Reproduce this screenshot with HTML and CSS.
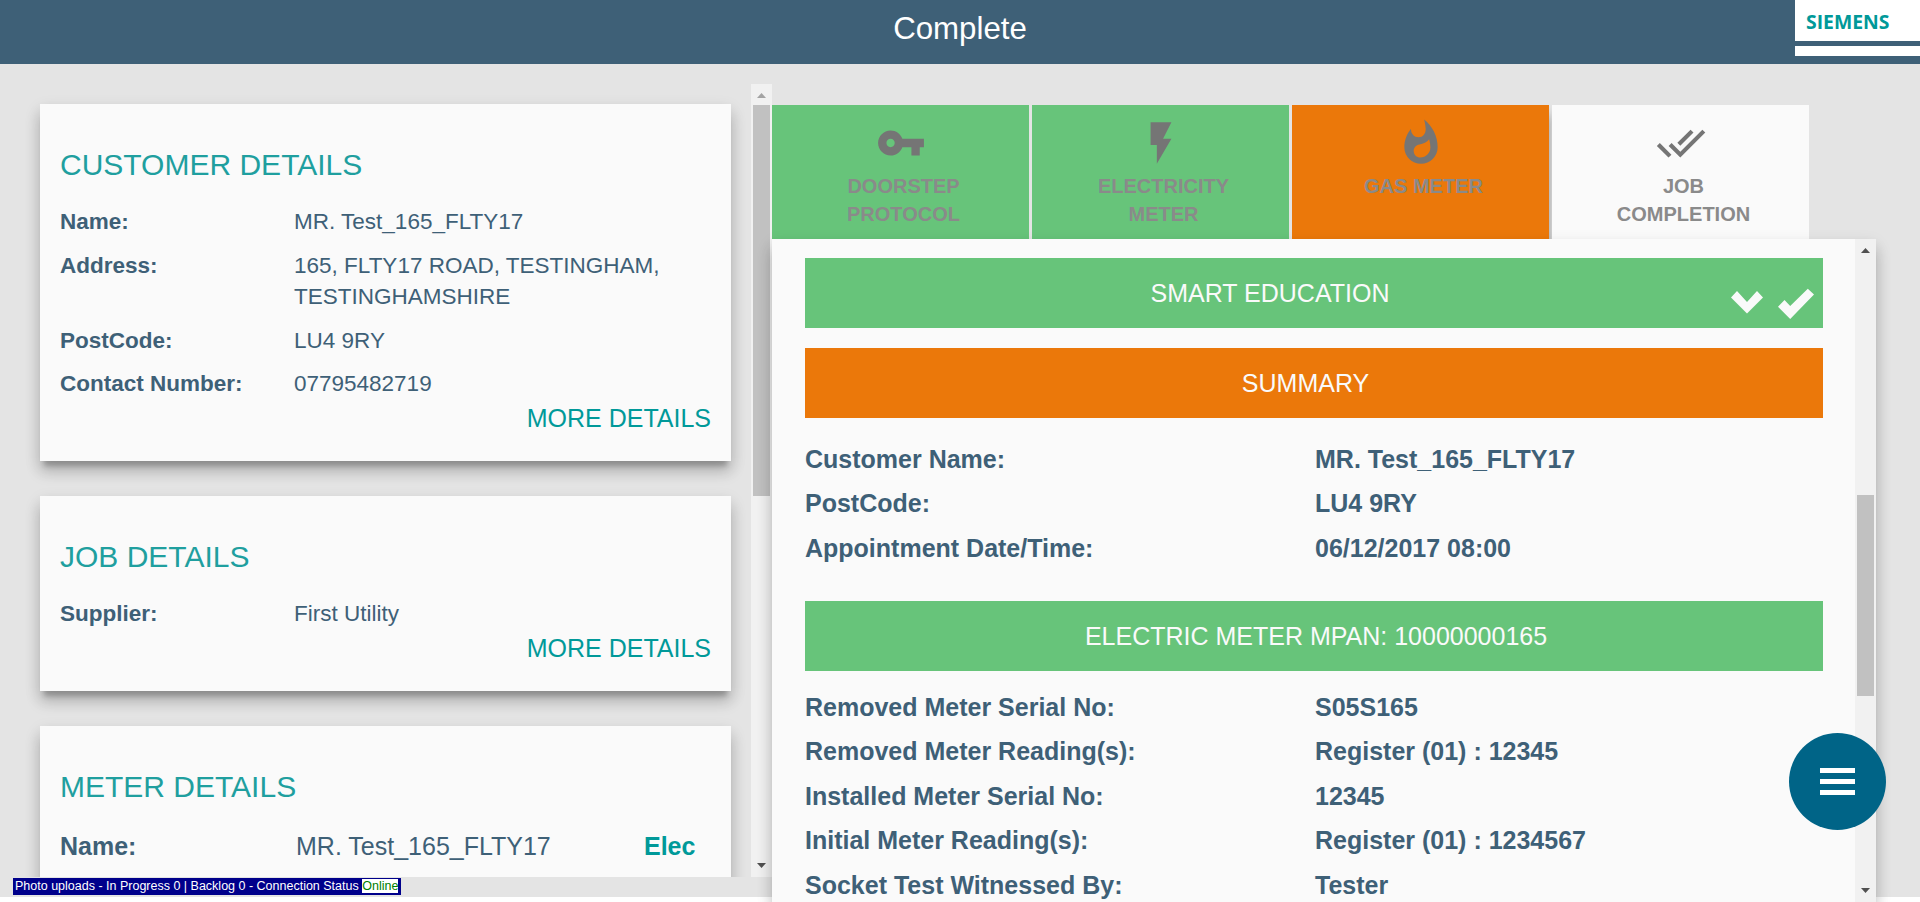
FILE: index.html
```html
<!DOCTYPE html>
<html lang="en">
<head>
<meta charset="utf-8">
<title>Complete</title>
<link rel="stylesheet" href="styles.css">
</head>
<body>
<div class="app">
  <header class="header">
    <h1 class="header-title">Complete</h1>
    <div class="brand"><span class="brand-name">SIEMENS</span><span class="brand-rule"></span></div>
  </header>

  <main class="main">
    <section class="sidebar">
      <div class="cards">
        <article class="card">
          <h2 class="card-title">CUSTOMER DETAILS</h2>
          <dl class="details">
            <dt>Name:</dt><dd>MR. Test_165_FLTY17</dd>
            <dt>Address:</dt><dd>165, FLTY17 ROAD, TESTINGHAM, TESTINGHAMSHIRE</dd>
            <dt>PostCode:</dt><dd>LU4 9RY</dd>
            <dt>Contact Number:</dt><dd>07795482719</dd>
          </dl>
          <a class="more">MORE DETAILS</a>
        </article>
        <article class="card">
          <h2 class="card-title">JOB DETAILS</h2>
          <dl class="details">
            <dt>Supplier:</dt><dd>First Utility</dd>
          </dl>
          <a class="more">MORE DETAILS</a>
        </article>
        <article class="card card-meter">
          <h2 class="card-title">METER DETAILS</h2>
          <div class="meter-row">
            <b class="meter-label">Name:</b><span class="meter-name">MR. Test_165_FLTY17</span><b class="meter-type">Elec</b>
          </div>
        </article>
      </div>
      <div class="scrollbar scrollbar-left">
        <svg class="arrow arrow-muted" viewBox="0 0 21 21"><path d="M6 14h9L10.500 9z"/></svg>
        <div class="thumb thumb-left"></div>
        <svg class="arrow arrow-end" viewBox="0 0 21 21"><path d="M6 7h9L10.500 12z"/></svg>
      </div>
    </section>

    <section class="content">
      <nav class="tabs">
        <div class="tab done">
          <svg class="tab-icon" viewBox="0 0 24 24"><path d="M12.650 10C11.830 7.670 9.610 6 7 6c-3.310 0-6 2.690-6 6s2.690 6 6 6c2.610 0 4.830-1.670 5.650-4H17v4h4v-4h2v-4H12.650zM7 14c-1.100 0-2-.900-2-2s.900-2 2-2 2 .900 2 2-.900 2-2 2z"/></svg>
          <span class="tab-label">DOORSTEP PROTOCOL</span>
        </div>
        <div class="tab done">
          <svg class="tab-icon" viewBox="0 0 24 24"><path d="M7 2v11h3v9l7-12h-4l4-8z"/></svg>
          <span class="tab-label">ELECTRICITY METER</span>
        </div>
        <div class="tab active">
          <svg class="tab-icon" viewBox="0 0 24 24"><path d="M13.500.670s.740 2.650.740 4.800c0 2.060-1.350 3.730-3.410 3.730-2.070 0-3.630-1.670-3.630-3.730l.030-.360C5.210 7.510 4 10.620 4 14c0 4.420 3.580 8 8 8s8-3.580 8-8C20 8.610 17.410 3.800 13.500.670zM11.710 19c-1.780 0-3.220-1.400-3.220-3.140 0-1.620 1.050-2.760 2.810-3.120 1.770-.360 3.600-1.210 4.620-2.580.390 1.290.590 2.650.590 4.040 0 2.650-2.150 4.800-4.800 4.800z"/></svg>
          <span class="tab-label">GAS METER</span>
        </div>
        <div class="tab pending">
          <svg class="tab-icon" viewBox="0 0 24 24"><path d="M18 7l-1.410-1.410-6.340 6.340 1.410 1.410L18 7zm4.240-1.410L11.660 16.170 7.480 12l-1.410 1.410L11.660 19l12-12-1.420-1.410zM.410 13.410L6 19l1.410-1.410L1.830 12 .410 13.410z"/></svg>
          <span class="tab-label">JOB COMPLETION</span>
        </div>
      </nav>

      <div class="panel">
        <div class="panel-body">
          <div class="bar done bar-education">SMART EDUCATION
            <svg class="bar-icons" viewBox="0 0 86 34"><path d="M6 4L16 15 26 4 32 10.500 16 26.500 0 10.500z"/><path d="M47 19.700L53.500 13 59.200 19 76.800 1.700 83 7.500 59.200 32z"/></svg>
          </div>
          <div class="bar active bar-summary">SUMMARY</div>
          <dl class="facts">
            <dt>Customer Name:</dt><dd>MR. Test_165_FLTY17</dd>
            <dt>PostCode:</dt><dd>LU4 9RY</dd>
            <dt>Appointment Date/Time:</dt><dd>06/12/2017 08:00</dd>
          </dl>
          <div class="bar done bar-meter">ELECTRIC METER MPAN: 10000000165</div>
          <dl class="facts facts-meter">
            <dt>Removed Meter Serial No:</dt><dd>S05S165</dd>
            <dt>Removed Meter Reading(s):</dt><dd>Register (01) : 12345</dd>
            <dt>Installed Meter Serial No:</dt><dd>12345</dd>
            <dt>Initial Meter Reading(s):</dt><dd>Register (01) : 1234567</dd>
            <dt>Socket Test Witnessed By:</dt><dd>Tester</dd>
          </dl>
        </div>
        <div class="scrollbar scrollbar-right">
          <svg class="arrow" viewBox="0 0 21 21"><path d="M6 14h9L10.500 9z"/></svg>
          <div class="thumb thumb-right"></div>
          <svg class="arrow arrow-end" viewBox="0 0 21 21"><path d="M6 7h9L10.500 12z"/></svg>
        </div>
      </div>
    </section>
  </main>

  <div class="status">Photo uploads - In Progress 0 | Backlog 0 - Connection Status <span class="online">Online</span></div>
  <button class="fab" aria-label="Menu"><span></span><span></span><span></span></button>
</div>
</body>
</html>
```
FILE: styles.css
```css
* { box-sizing: border-box; }
body { margin: 0; background: #fff; font-family: "Liberation Sans", Arial, sans-serif; color: #3e6077; }
h1, h2, dl, dt, dd { margin: 0; font-weight: normal; }
.app { position: relative; width: 1920px; height: 902px; overflow: hidden; background: linear-gradient(#e4e4e4 897px, #fff 897px); }

.header { display: flex; height: 64px; background: #3e6077; justify-content: center; position: relative; }
.header-title { font-size: 31.25px; line-height: 57px; color: #fff; }
.brand { position: absolute; top: 0; right: 0; width: 125px; height: 56px; background: #fff; }
.brand-name { display: block; padding-left: 11px; padding-top: 11px; font: bold 19.4px/21px "Open Sans", sans-serif; color: #009999; }
.brand-rule { display: block; height: 5px; margin-top: 9px; background: #3e6077; }

.main { display: flex; height: 838px; }
.sidebar { display: flex; width: 772px; height: 793px; margin-top: 20px; overflow: hidden; }
.cards { display: flex; flex-direction: column; gap: 35px; width: 751px; padding: 20px 20px 0 40px; }
.card, .panel { box-shadow: 0 9px 5px -4px rgba(0,0,0,.2), 0 11px 14px 0 rgba(0,0,0,.16), 0 6px 16px 0 rgba(0,0,0,.12); }
.card { flex: none; height: 195px; padding: 41px 20px 0; background: #fafafa; }
.card:first-child { height: 357px; }
.card-title { font-size: 30px; line-height: 40px; color: #1f9f9f; }
.details { display: grid; grid-template-columns: 234px 1fr; row-gap: 12px; margin-top: 21px; font-size: 22.5px; line-height: 31.5px; }
.details dt { font-weight: bold; white-space: nowrap; }
.more { display: block; font-size: 25px; line-height: 36px; text-align: right; color: #009999; }
.meter-row { display: grid; grid-template-columns: 236px 348px 1fr; margin-top: 21px; font-size: 25px; line-height: 36px; }
.meter-type { color: #009999; }

.scrollbar { display: flex; flex-direction: column; flex: none; width: 21px; background: #f1f1f1; }
.arrow { display: block; flex: none; width: 21px; height: 21px; fill: #505050; }
.arrow-muted { fill: #a3a3a3; }
.arrow-end { margin-top: auto; }
.thumb { width: 17px; margin: 0 auto; background: #c1c1c1; }
.thumb-left { height: 391px; }
.thumb-right { height: 201px; margin-top: 235px; }

.content { display: flex; flex-direction: column; width: 1104px; padding-top: 41px; }
.tabs { display: flex; gap: 3px; height: 134px; }
.tab { display: flex; flex-direction: column; align-items: center; width: 257px; padding-top: 13px; }
.done { background: #67c47a; }
.active { background: #eb780a; }
.tab.active { box-shadow: 0 10px 10px rgba(0,0,0,.35); clip-path: inset(0 -3px 0 0); }
.pending { background: #fafafa; }
.tab-icon { width: 50px; height: 50px; fill: #757575; }
.tab-label { width: 150px; margin-left: 6px; margin-top: 4px; font-size: 20px; font-weight: bold; line-height: 28px; text-align: center; color: #8a8a8a; }
.panel { position: relative; display: flex; flex: 1; background: #fafafa; }
.panel-body { flex: 1; height: 663px; padding: 19px 32px 0 33px; overflow: hidden; }
.bar { display: flex; align-items: center; justify-content: center; height: 70px; font-size: 25px; line-height: 36px; color: #fafafa; }
.bar-education { position: relative; margin-bottom: 20px; padding-right: 88px; }
.bar-summary { padding-right: 17px; }
.bar-meter { padding-left: 4px; }
.bar-icons { position: absolute; right: 6px; top: 29px; width: 86px; height: 34px; fill: #fafafa; }
.facts { display: grid; grid-template-columns: 510px 1fr; grid-auto-rows: 44.5px; padding: 18.500px 0 31px; font-size: 25px; font-weight: bold; line-height: 44.5px; }
.facts dt, .facts dd { font-weight: bold; white-space: nowrap; }
.facts-meter { padding-top: 13.800px; }

.status { position: absolute; left: 13px; top: 878px; height: 17px; padding: 1px 3px 1px 2px; background: #00008b; color: #fff; font-size: 12.5px; line-height: 14px; white-space: nowrap; }
.online { display: inline-block; background: #fff; color: #008000; }
.fab { position: absolute; left: 1788.5px; top: 732.500px; display: flex; flex-direction: column; align-items: center; justify-content: center; gap: 6px; width: 97px; height: 97px; padding: 0; border: 0; border-radius: 50%; background: #006487; }
.fab span { width: 35px; height: 5px; background: #fff; }
```
